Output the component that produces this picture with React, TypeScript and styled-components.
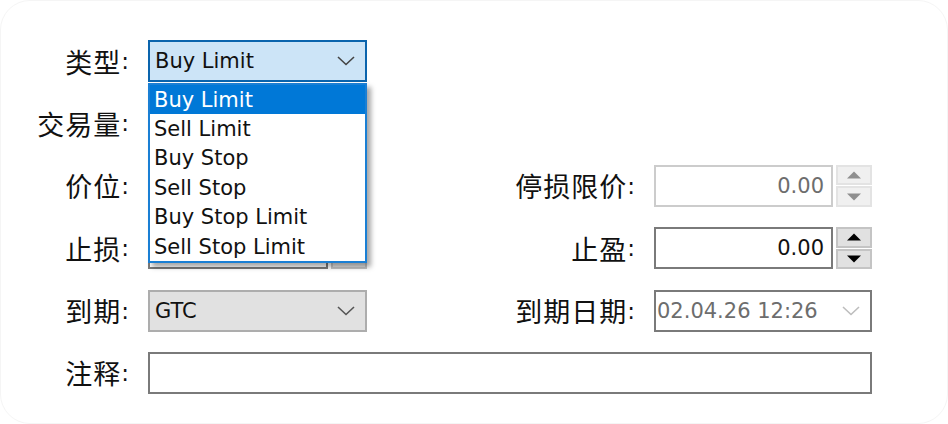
import React from 'react';
import styled, { createGlobalStyle } from 'styled-components';

const Global = createGlobalStyle`
  html, body { margin: 0; padding: 0; background: #ffffff; }
  body { width: 948px; height: 424px; overflow: hidden; }
`;

const Card = styled.div`
  box-sizing: border-box;
  width: 948px;
  height: 424px;
  border: 1px solid #f5f5f5;
  border-radius: 30px;
  background: #fff;
  padding: 39px 76px 0 19px;
`;

const Form = styled.div`
  position: relative;
  display: grid;
  grid-template-columns: 108px 219px 247px 218px;
  grid-auto-rows: 42px;
  column-gap: 20px;
  row-gap: 20.4px;
`;

const Label = styled.div<{ $col?: number }>`
  grid-column: ${(p) => p.$col ?? 1};
  display: flex;
  align-items: center;
  justify-content: flex-end;
  font-family: 'Noto Sans CJK SC', 'DejaVu Sans', sans-serif;
  font-size: 27px;
  letter-spacing: 1px;
  color: #111;
  white-space: nowrap;
  margin-right: -1px;
`;

const Colon = styled.span`
  font-family: 'DejaVu Sans', sans-serif;
  font-size: 23px;
  letter-spacing: 0;
`;

const Select = styled.div<{ $variant: 'focus' | 'plain' | 'date' }>`
  box-sizing: border-box;
  display: flex;
  align-items: center;
  justify-content: space-between;
  padding: 0 10px 0 6px;
  font-family: 'DejaVu Sans', sans-serif;
  font-size: 21px;
  border: 2px solid
    ${(p) => (p.$variant === 'focus' ? '#0a64ad' : p.$variant === 'plain' ? '#adadad' : '#7a7a7a')};
  background: ${(p) => (p.$variant === 'focus' ? '#cce4f7' : p.$variant === 'plain' ? '#e1e1e1' : '#fff')};
  color: ${(p) => (p.$variant === 'date' ? '#6d6d6d' : '#111')};
  padding-left: ${(p) => (p.$variant === 'date' ? '1px' : '5px')};
`;

const Wide = styled.div`
  grid-column: 2 / 5;
  box-sizing: border-box;
  border: 2px solid #7a7a7a;
  background: #fff;
`;

const NumberField = styled.div`
  display: flex;
  gap: 3px;
`;

const NumberBox = styled.div<{ $disabled?: boolean }>`
  box-sizing: border-box;
  flex: 1;
  display: flex;
  align-items: center;
  justify-content: flex-end;
  padding-right: 7px;
  font-family: 'DejaVu Sans', sans-serif;
  font-size: 21px;
  border: 2px solid ${(p) => (p.$disabled ? '#cccccc' : '#7a7a7a')};
  background: #fff;
  color: ${(p) => (p.$disabled ? '#6d6d6d' : '#111')};
`;

const Spinner = styled.div`
  width: 36px;
  display: flex;
  flex-direction: column;
  gap: 1px;
`;

const SpinButton = styled.div<{ $disabled?: boolean }>`
  box-sizing: border-box;
  flex: 1;
  display: flex;
  align-items: center;
  justify-content: center;
  border: 2px solid ${(p) => (p.$disabled ? '#e3e3e3' : '#c4c4c4')};
  background: ${(p) => (p.$disabled ? '#f0f0f0' : '#e1e1e1')};
  color: ${(p) => (p.$disabled ? '#8f8f8f' : '#000')};
`;

const List = styled.div`
  position: absolute;
  left: 128px;
  top: 43px;
  width: 219px;
  box-sizing: border-box;
  border: 2px solid #1a7fd4;
  background: #fff;
  box-shadow: 4px 4px 5px rgba(0, 0, 0, 0.35);
  z-index: 2;
`;

const Item = styled.div<{ $active?: boolean }>`
  height: 29.4px;
  display: flex;
  align-items: center;
  padding-left: 4px;
  font-family: 'DejaVu Sans', sans-serif;
  font-size: 21px;
  background: ${(p) => (p.$active ? '#0078d7' : 'transparent')};
  color: ${(p) => (p.$active ? '#fff' : '#111')};
  white-space: nowrap;
`;

const Chevron = ({ color }: { color: string }) => (
  <svg width="18" height="10" viewBox="0 0 18 10">
    <path d="M1 1 L9 8.5 L17 1" fill="none" stroke={color} strokeWidth="1.6" />
  </svg>
);

const Arrow = ({ up }: { up?: boolean }) => (
  <svg width="14" height="8" viewBox="0 0 14 8">
    <path d={up ? 'M0 7.5 L7 0.5 L14 7.5 Z' : 'M0 0.5 L7 7.5 L14 0.5 Z'} fill="currentColor" />
  </svg>
);

const Spin = ({ disabled }: { disabled?: boolean }) => (
  <Spinner>
    <SpinButton $disabled={disabled}>
      <Arrow up />
    </SpinButton>
    <SpinButton $disabled={disabled}>
      <Arrow />
    </SpinButton>
  </Spinner>
);

const types = ['Buy Limit', 'Sell Limit', 'Buy Stop', 'Sell Stop', 'Buy Stop Limit', 'Sell Stop Limit'];

const L = ({ text, col }: { text: string; col?: number }) => (
  <Label $col={col}>
    {text}
    <Colon>:</Colon>
  </Label>
);

export default function App() {
  return (
    <Card>
      <Global />
      <Form>
        <L text="类型" />
        <Select $variant="focus">
          <span>Buy Limit</span>
          <Chevron color="#444" />
        </Select>
        <div />
        <div />

        {/* fields below are hidden under the open list */}
        <L text="交易量" />
        <NumberField>
          <NumberBox />
          <Spin />
        </NumberField>
        <div />
        <div />

        <L text="价位" />
        <NumberField>
          <NumberBox />
          <Spin />
        </NumberField>
        <L text="停损限价" col={3} />
        <NumberField>
          <NumberBox $disabled>0.00</NumberBox>
          <Spin disabled />
        </NumberField>

        <L text="止损" />
        <NumberField>
          <NumberBox />
          <Spin />
        </NumberField>
        <L text="止盈" col={3} />
        <NumberField>
          <NumberBox>0.00</NumberBox>
          <Spin />
        </NumberField>

        <L text="到期" />
        <Select $variant="plain">
          <span>GTC</span>
          <Chevron color="#555" />
        </Select>
        <L text="到期日期" col={3} />
        <Select $variant="date">
          <span>02.04.26 12:26</span>
          <Chevron color="#bdbdbd" />
        </Select>

        <L text="注释" />
        <Wide />

        <List>
          {types.map((t, i) => (
            <Item key={t} $active={i === 0}>
              {t}
            </Item>
          ))}
        </List>
      </Form>
    </Card>
  );
}
